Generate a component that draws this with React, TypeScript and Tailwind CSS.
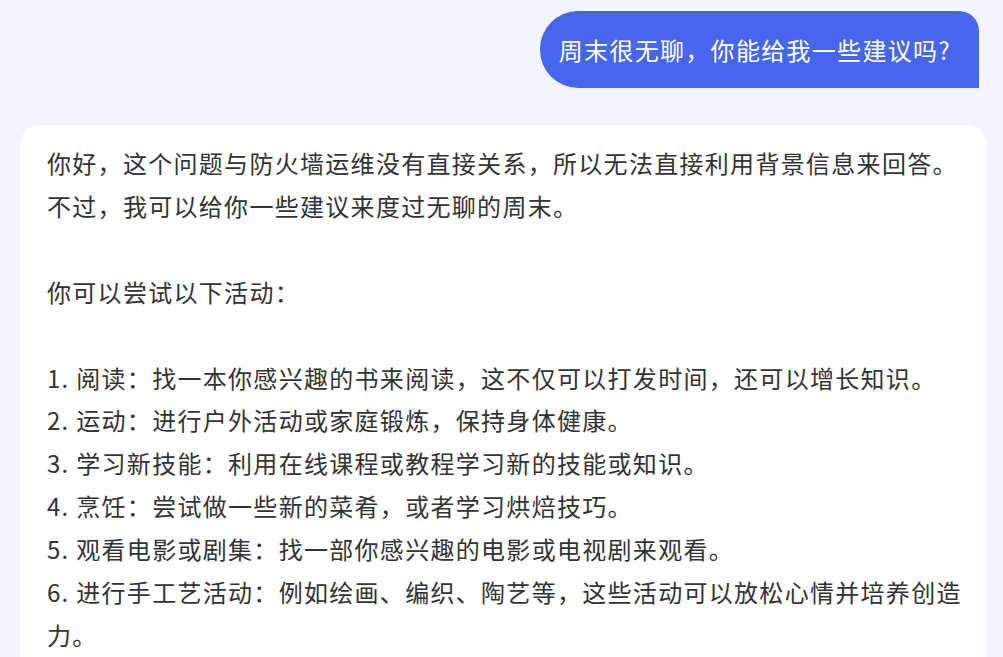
import React from 'react';

const items = [
  '阅读：找一本你感兴趣的书来阅读，这不仅可以打发时间，还可以增长知识。',
  '运动：进行户外活动或家庭锻炼，保持身体健康。',
  '学习新技能：利用在线课程或教程学习新的技能或知识。',
  '烹饪：尝试做一些新的菜肴，或者学习烘焙技巧。',
  '观看电影或剧集：找一部你感兴趣的电影或电视剧来观看。',
  '进行手工艺活动：例如绘画、编织、陶艺等，这些活动可以放松心情并培养创造力。'
];

const font = { fontFamily: '"Noto Sans CJK SC", "Noto Sans", sans-serif' };

const App = () => {
  return (
    <div className="flex min-h-screen w-full flex-col overflow-hidden bg-[#f2f5fd]" style={font}>
      <div className="mt-[11px] mr-[24px] flex justify-end">
        <div className="flex h-[77px] items-center rounded-l-[38px] rounded-tr-[20px] rounded-br-none bg-[#4766f0] pl-[19px] pr-[28px] text-[24px] tracking-[1.3px] text-white">
          周末很无聊，你能给我一些建议吗?
        </div>
      </div>

      <div className="mt-[37px] ml-[20px] mr-[16px] rounded-t-[20px] bg-white pl-[27px] pr-[15px] pt-[17px] pb-6 text-[24px] leading-[42.9px] tracking-[1.3px] text-[#333333]">
        <p>你好，这个问题与防火墙运维没有直接关系，所以无法直接利用背景信息来回答。</p>
        <p>不过，我可以给你一些建议来度过无聊的周末。</p>
        <div className="h-[42.9px]" />
        <p>你可以尝试以下活动：</p>
        <div className="h-[42.9px]" />
        <ol>
          {items.map((item, i) => (
            <li key={i}>{`${i + 1}. ${item}`}</li>
          ))}
        </ol>
      </div>
    </div>
  );
};

export default App;
